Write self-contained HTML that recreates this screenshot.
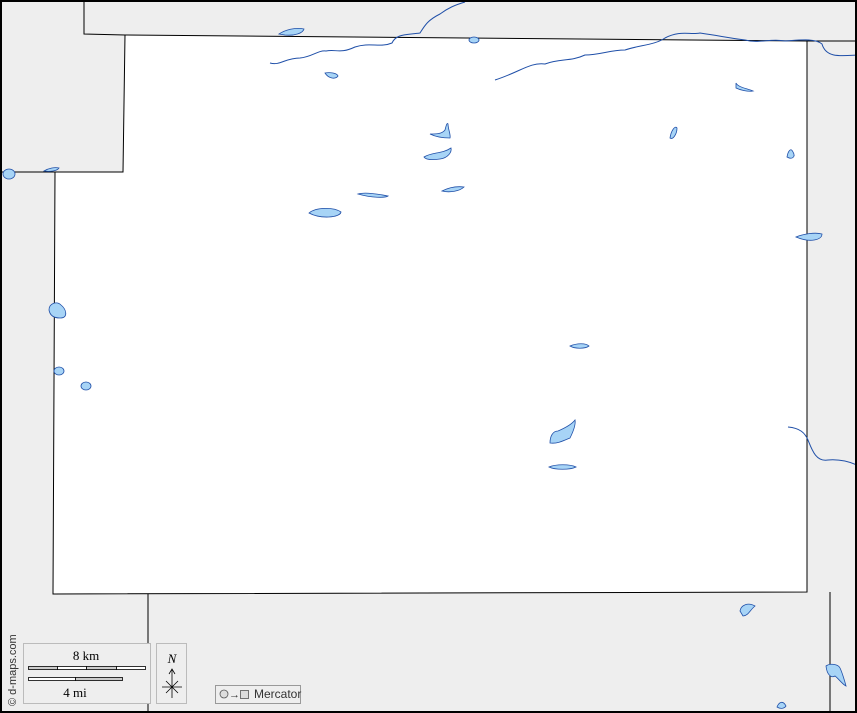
<!DOCTYPE html>
<html><head><meta charset="utf-8"><style>
html,body{margin:0;padding:0;width:857px;height:713px;overflow:hidden;background:#eee}
svg{display:block}
.s{font-family:"Liberation Serif",serif}
.a{font-family:"Liberation Sans",sans-serif}
</style></head><body>
<svg width="857" height="713" viewBox="0 0 857 713" xmlns="http://www.w3.org/2000/svg">
<rect x="0" y="0" width="857" height="713" fill="#eeeeee"/>
<polygon points="125,35 807,41 807,592 53,594 55,172 123,172" fill="#fff" stroke="#000" stroke-width="1"/>
<g stroke="#000" stroke-width="1" fill="none">
<polyline points="84,0 84,34 125,35"/>
<polyline points="807,41 857,41"/>
<polyline points="0,172 55,172"/>
<polyline points="148,594 148,713"/>
<polyline points="830,592 830,713"/>
</g>
<g stroke="#1f4fa8" stroke-width="1" fill="none">
<path d="M270,63 C280,66 285,58 300,58 C312,57 318,50 326,51 C336,49 340,54 355,47 C370,42 380,48 392,43 C396,34 405,35 420,33 C425,25 428,20 440,14 C448,8 455,5 465,2"/>
<path d="M495,80 C520,72 530,62 545,64 C560,58 570,62 585,55 C600,55 610,50 625,50 C640,45 655,45 665,38 C680,30 690,35 700,33 C720,36 730,38 745,40 C760,44 770,38 785,41 C800,40 815,38 822,44 C826,58 840,56 857,55"/>
<path d="M788,427 C800,428 805,433 808,440 C812,450 816,462 828,460 C840,459 850,462 857,465"/>
</g>
<g fill="#a7d4f6" stroke="#1f4fa8" stroke-width="0.8">
<path d="M279,34 C285,30 295,27 304,29 C303,33 295,36 285,35 Z"/>
<ellipse cx="474" cy="40" rx="5" ry="3"/>
<path d="M325,73 C330,72 337,73 338,76 C335,80 328,78 325,73 Z"/>
<path d="M430,134 C436,134 442,134 445,130 C446,126 447,122 448,124 C448,129 451,135 450,138 C444,138 436,137 430,134 Z"/>
<path d="M424,157 C432,152 442,154 451,148 C452,152 448,158 440,159 C433,160 426,160 424,157 Z"/>
<path d="M358,194 C364,192 378,194 388,196 C385,198 372,198 358,194 Z"/>
<path d="M442,191 C448,188 456,186 464,187 C460,191 450,193 442,191 Z"/>
<path d="M309,213 C316,207 334,207 341,212 C340,218 320,219 309,213 Z"/>
<path d="M670,138 C671,131 675,125 677,128 C677,134 673,140 670,138 Z"/>
<path d="M736,83 C738,87 745,88 753,91 C748,92 740,90 736,88 Z"/>
<path d="M787,157 C788,151 791,147 793,152 C796,157 792,160 787,157 Z"/>
<path d="M796,237 C803,234 815,232 822,234 C822,240 810,243 796,237 Z"/>
<path d="M570,346 C577,343 586,343 589,346 C585,349 575,349 570,346 Z"/>
<path d="M550,443 C550,436 553,431 558,431 C565,428 572,424 575,420 C576,425 573,432 570,438 C563,441 557,444 550,443 Z"/>
<path d="M549,467 C556,464 570,464 576,467 C570,470 555,470 549,467 Z"/>
<path d="M49,310 C49,303 57,301 61,305 C66,309 69,318 60,318 C54,318 50,316 49,310 Z"/>
<ellipse cx="59" cy="371" rx="5" ry="4"/>
<ellipse cx="86" cy="386" rx="5" ry="4"/>
<ellipse cx="9" cy="174" rx="6" ry="5"/>
<path d="M44,171 C49,168 55,167 59,168 C57,171 50,172 44,171 Z"/>
<path d="M740,611 C741,605 748,602 755,606 C750,610 748,616 743,616 Z"/>
<path d="M826,666 C830,663 838,664 840,668 C842,672 845,682 846,686 C842,684 838,678 835,676 C832,678 827,676 826,666 Z"/>
<path d="M777,707 C779,702 783,700 786,706 C784,709 780,709 777,707 Z"/>
</g>
<rect x="1" y="1" width="855" height="711" fill="none" stroke="#000" stroke-width="2"/>
<text class="a" x="16" y="706" font-size="11" fill="#333" transform="rotate(-90 16 706)">© d-maps.com</text>
<rect x="23.5" y="643.5" width="127" height="60" fill="#eee" stroke="#bbb"/>
<text class="s" x="86" y="660" font-size="13" text-anchor="middle" fill="#000">8 km</text>
<g stroke="#000" stroke-width="0.8">
<rect x="28.5" y="666.5" width="29" height="3" fill="#ccc"/>
<rect x="57.5" y="666.5" width="29" height="3" fill="#fff"/>
<rect x="86.5" y="666.5" width="30" height="3" fill="#ccc"/>
<rect x="116.5" y="666.5" width="29" height="3" fill="#fff"/>
<rect x="28.5" y="677.5" width="47" height="3" fill="#fff"/>
<rect x="75.5" y="677.5" width="47" height="3" fill="#ccc"/>
</g>
<text class="s" x="75" y="697" font-size="13" text-anchor="middle" fill="#000">4 mi</text>
<rect x="156.5" y="643.5" width="30" height="60" fill="#eee" stroke="#bbb"/>
<text class="s" x="172" y="663" font-size="13" font-style="italic" text-anchor="middle" fill="#000">N</text>
<g stroke="#000" stroke-width="0.8" fill="none">
<line x1="172" y1="670" x2="172" y2="698"/>
<polyline points="169,674 172,669 175,674"/>
<line x1="162" y1="687" x2="182" y2="687"/>
<line x1="166" y1="681" x2="178" y2="693"/>
<line x1="178" y1="681" x2="166" y2="693"/>
</g>
<rect x="215.5" y="685.5" width="85" height="18" fill="#eee" stroke="#999"/>
<circle cx="224" cy="694" r="4" fill="#ddd" stroke="#555" stroke-width="0.8"/>
<text class="a" x="229" y="698" font-size="11" fill="#333">→</text>
<rect x="240.5" y="690.5" width="8" height="8" fill="#ddd" stroke="#555" stroke-width="0.8"/>
<text class="a" x="254" y="698" font-size="12" fill="#333">Mercator</text>
</svg>
</body></html>
